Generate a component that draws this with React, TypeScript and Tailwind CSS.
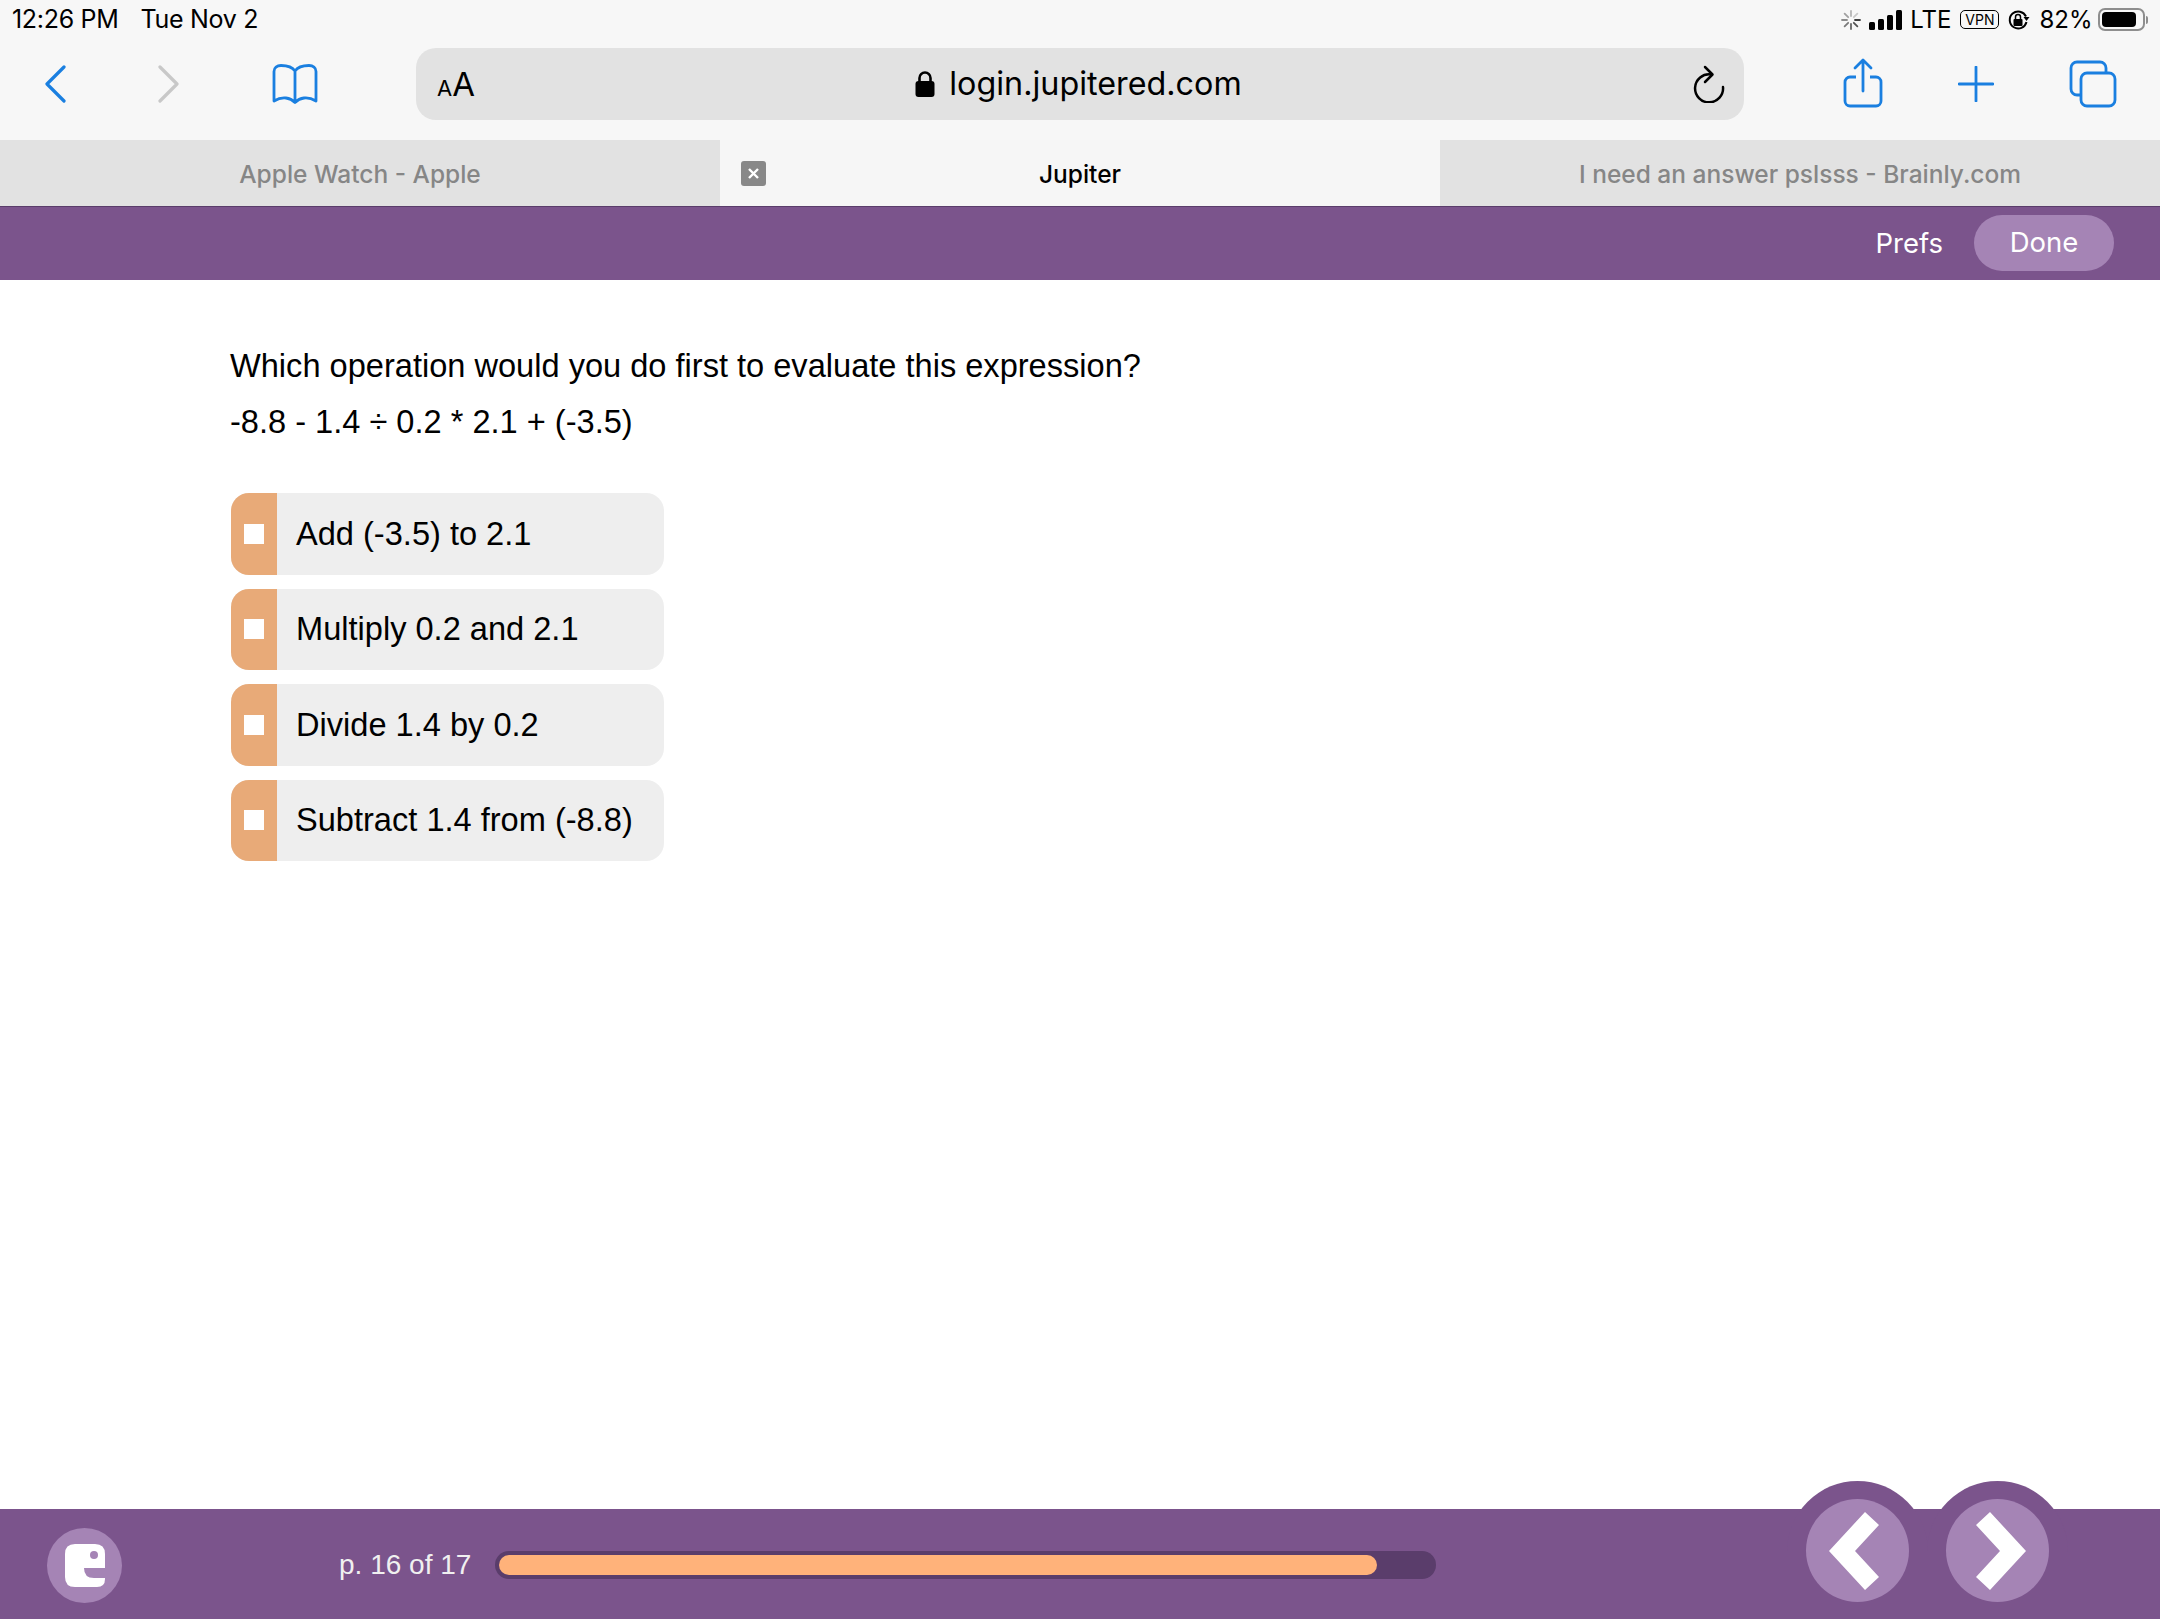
import { ReactNode } from "react";

const options = [
  "Add (-3.5) to 2.1",
  "Multiply 0.2 and 2.1",
  "Divide 1.4 by 0.2",
  "Subtract 1.4 from (-8.8)",
];

const spinnerSpokes = [0, 45, 90, 135, 180, 225, 270, 315];

function StatusBar() {
  return (
    <div className="flex h-[38px] items-center justify-between pl-[12px] pr-[12px] pt-[1px] leading-none text-black font-['Inter',sans-serif]">
      <div className="flex gap-[22px] text-[25px] tracking-[-0.3px]">
        <span>12:26 PM</span>
        <span>Tue Nov 2</span>
      </div>
      <div className="flex items-center text-[24px]">
        {/* loading spinner */}
        <svg width="22" height="22" viewBox="0 0 22 22" className="mr-[7px]">
          {spinnerSpokes.map((a, i) => (
            <line
              key={a}
              x1="11"
              y1="2"
              x2="11"
              y2="7"
              stroke="#000"
              strokeOpacity={0.75 - i * 0.08}
              strokeWidth="1.8"
              strokeLinecap="round"
              transform={`rotate(${a + 90} 11 11)`}
            />
          ))}
        </svg>
        <div className="flex h-[20px] items-end gap-[2.5px]">
          <div className="h-[8px] w-[6.5px] rounded-[1.5px] bg-black" />
          <div className="h-[11px] w-[6.5px] rounded-[1.5px] bg-black" />
          <div className="h-[15px] w-[6.5px] rounded-[1.5px] bg-black" />
          <div className="h-[20px] w-[6.5px] rounded-[1.5px] bg-black" />
        </div>
        <span className="ml-[8px]">LTE</span>
        <div className="ml-[9px] flex h-[19px] w-[39px] items-center justify-center rounded-[5px] border-[1.5px] border-black text-[14px]">
          VPN
        </div>
        <svg width="24" height="22" viewBox="0 0 24 22" className="ml-[8px]">
          <path d="M19 7.5A8.5 8.5 0 1 0 19.5 13" fill="none" stroke="#000" strokeWidth="2" />
          <path d="M16.5 8h6l-3 4z" fill="#000" />
          <rect x="6.5" y="10" width="9" height="7" rx="1" fill="#000" />
          <path d="M8.5 10V8a2.5 2.5 0 0 1 5 0v2" fill="none" stroke="#000" strokeWidth="1.5" />
        </svg>
        <span className="ml-[8px]">82%</span>
        <div className="ml-[5px] flex h-[23px] w-[47px] items-center rounded-[7px] border-[2px] border-[#8e8e8e] pl-[2px]">
          <div className="h-[15px] w-[34px] rounded-[4px] bg-black" />
        </div>
        <div className="ml-[1.5px] h-[8px] w-[2px] rounded-r-[2px] bg-[#8e8e8e]" />
      </div>
    </div>
  );
}

function Toolbar() {
  return (
    <div className="mt-[10px] flex h-[92px] items-start pl-[44px]">
      <svg width="22" height="38" viewBox="0 0 22 38" className="mt-[17px]">
        <path d="M20 2 3 19l17 17" fill="none" stroke="#1a7fe0" strokeWidth="3.2" strokeLinecap="round" strokeLinejoin="round" />
      </svg>
      <svg width="22" height="38" viewBox="0 0 22 38" className="ml-[92px] mt-[17px]">
        <path d="M2 2l17 17L2 36" fill="none" stroke="#c8c8c8" strokeWidth="3.2" strokeLinecap="round" strokeLinejoin="round" />
      </svg>
      <svg width="46" height="40" viewBox="0 0 46 40" className="ml-[92px] mt-[16px]">
        <path
          d="M23 7C20 2.5 15 1.5 9 1.5 5 1.5 2 3.5 2 7.5V37c5-3 8-3.5 12-3 4 .5 7 2.5 9 4.5 2-2 5-4 9-4.5 4-.5 7 0 12 3V7.5C44 3.5 41 1.5 37 1.5 31 1.5 26 2.5 23 7ZM23 7V37"
          fill="none"
          stroke="#1a7fe0"
          strokeWidth="2.8"
          strokeLinejoin="round"
        />
      </svg>
      <div className="ml-[98px] flex h-[72px] w-[1328px] items-center rounded-[20px] bg-[#e2e2e2] pl-[21px] pr-[18px] font-['Inter',sans-serif] text-black">
        <div className="flex w-[40px] items-baseline leading-none">
          <span className="text-[22px]">A</span>
          <span className="text-[33px]">A</span>
        </div>
        <div className="flex flex-1 items-center justify-center pr-[12px]">
          <svg width="20" height="26" viewBox="0 0 20 26" className="mr-[14px]">
            <rect x="0.5" y="10" width="19" height="16" rx="3" fill="#000" />
            <path d="M4.5 11V7a5.5 5.5 0 0 1 11 0v4" fill="none" stroke="#000" strokeWidth="2.6" />
          </svg>
          <span className="text-[32.3px] leading-none">login.jupitered.com</span>
        </div>
        <svg width="34" height="38" viewBox="0 0 34 38">
          <path d="M19 8.5A14 14 0 1 0 31 21" fill="none" stroke="#000" strokeWidth="2.5" strokeLinecap="round" transform="translate(0 1)" />
          <path d="M13 2l7.5 7.5L13 17" fill="none" stroke="#000" strokeWidth="2.5" strokeLinecap="round" strokeLinejoin="round" />
        </svg>
      </div>
      <svg width="40" height="50" viewBox="0 0 40 50" className="ml-[99px] mt-[10px]">
        <path d="M13 19H7a5 5 0 0 0-5 5v19a5 5 0 0 0 5 5h26a5 5 0 0 0 5-5V24a5 5 0 0 0-5-5h-6" fill="none" stroke="#1a7fe0" strokeWidth="2.8" />
        <path d="M20 33V3M12 10l8-8 8 8" fill="none" stroke="#1a7fe0" strokeWidth="2.8" strokeLinecap="round" strokeLinejoin="round" />
      </svg>
      <svg width="36" height="36" viewBox="0 0 36 36" className="ml-[75px] mt-[18px]">
        <path d="M18 1v34M1 18h34" fill="none" stroke="#1a7fe0" strokeWidth="2.8" strokeLinecap="round" />
      </svg>
      <svg width="48" height="48" viewBox="0 0 48 48" className="ml-[75px] mt-[12px]">
        <rect x="12" y="13" width="34" height="33" rx="6" fill="none" stroke="#1a7fe0" strokeWidth="2.8" />
        <path d="M12 35H8a6 6 0 0 1-6-6V8a6 6 0 0 1 6-6h23a6 6 0 0 1 6 6v5" fill="none" stroke="#1a7fe0" strokeWidth="2.8" />
      </svg>
    </div>
  );
}

function Tab({ active, children }: { active?: boolean; children: ReactNode }) {
  return (
    <div
      className={
        active
          ? "relative flex flex-1 items-center justify-center bg-[#f6f6f6] pt-[2px] text-[24.5px] font-medium text-black"
          : "flex w-[720px] items-center justify-center bg-[#e2e2e2] pt-[2px] text-[24.5px] font-medium text-[#868686]"
      }
    >
      {children}
    </div>
  );
}

function TabStrip() {
  return (
    <div className="flex h-[66px] font-['Inter',sans-serif] leading-none">
      <Tab>Apple Watch - Apple</Tab>
      <Tab active>
        <div className="absolute left-[21px] top-[21px] flex h-[25px] w-[25px] items-center justify-center rounded-[3px] bg-[#888888]">
          <svg width="13" height="13" viewBox="0 0 13 13">
            <path d="M2 2l9 9M11 2l-9 9" stroke="#fff" strokeWidth="2.4" />
          </svg>
        </div>
        Jupiter
      </Tab>
      <Tab>I need an answer pslsss - Brainly.com</Tab>
    </div>
  );
}

function TopBar() {
  return (
    <div className="flex h-[74px] items-center justify-end border-t border-[#5a3d6b] bg-[#7b548c] pr-[46px] font-['Inter',sans-serif] text-[27.5px] text-white">
      <span className="mr-[31px]">Prefs</span>
      <div className="-mt-[1px] flex h-[56px] w-[140px] items-center justify-center rounded-full bg-[#a584b5]">Done</div>
    </div>
  );
}

function OptionRow({ label }: { label: string }) {
  return (
    <div className="flex h-[81.5px] w-[433px] items-center overflow-hidden rounded-[18px] bg-[#eeeeee]">
      <div className="flex h-full w-[46px] items-center justify-center bg-[#e8aa78]">
        <div className="h-[20px] w-[20px] bg-white" />
      </div>
      <span className="ml-[19px] text-[32.6px] text-black">{label}</span>
    </div>
  );
}

function NavButton({ points, className }: { points: string; className: string }) {
  return (
    <div className={className}>
      <div className="flex h-[103px] w-[103px] items-center justify-center rounded-full bg-[#a584b5]">
        <svg width="103" height="103" viewBox="0 0 103 103">
          <polygon points={points} fill="#fff" />
        </svg>
      </div>
    </div>
  );
}

function BottomBar() {
  return (
    <div className="relative mb-px flex h-[110px] items-center bg-[#7b548c] pt-[2px] font-['Liberation_Sans',sans-serif]">
      <div className="ml-[47px] flex h-[75px] w-[75px] items-center justify-center rounded-full bg-[#a584b5]">
        <svg width="40" height="43" viewBox="0 0 40 43">
          <path d="M10 0H30Q40 0 40 10V24H19Q19 34 29 34H40V35Q40 43 32 43H10Q0 43 0 33V10Q0 0 10 0Z" fill="#fff" />
          <circle cx="29" cy="11" r="4" fill="#a584b5" />
        </svg>
      </div>
      <span className="ml-[217px] w-[156px] text-[28px] text-[#f0f0f0]">p. 16 of 17</span>
      <div className="flex h-[28px] w-[941px] items-center rounded-full bg-[#5a3d6b] px-[4px]">
        <div className="h-[20px] w-[878px] rounded-full bg-[#ffb27a]" />
      </div>
      <NavButton
        className="absolute left-[1787px] top-[-28px] flex h-[138px] w-[141px] justify-center overflow-hidden rounded-t-full bg-[#7b548c] pt-[18px]"
        points="23,52 59,13 73,26 49,52 73,78 59,91"
      />
      <NavButton
        className="absolute left-[1927px] top-[-28px] flex h-[138px] w-[141px] justify-center overflow-hidden rounded-t-full bg-[#7b548c] pt-[18px]"
        points="80,52 44,13 30,26 54,52 30,78 44,91"
      />
    </div>
  );
}

export default function App() {
  return (
    <div className="flex h-[1620px] w-[2160px] flex-col overflow-hidden bg-white">
      <div className="bg-[#f7f7f7]">
        <StatusBar />
        <Toolbar />
      </div>
      <TabStrip />
      <TopBar />
      <main className="flex-1 pl-[230px] pt-[58px] font-['Liberation_Sans',sans-serif] text-[32.6px] leading-[56px] text-black">
        <p>Which operation would you do first to evaluate this expression?</p>
        <p>-8.8 - 1.4 ÷ 0.2 * 2.1 + (-3.5)</p>
        <div className="ml-[1px] mt-[43px] flex flex-col gap-[14px]">
          {options.map((o) => (
            <OptionRow key={o} label={o} />
          ))}
        </div>
      </main>
      <BottomBar />
    </div>
  );
}
